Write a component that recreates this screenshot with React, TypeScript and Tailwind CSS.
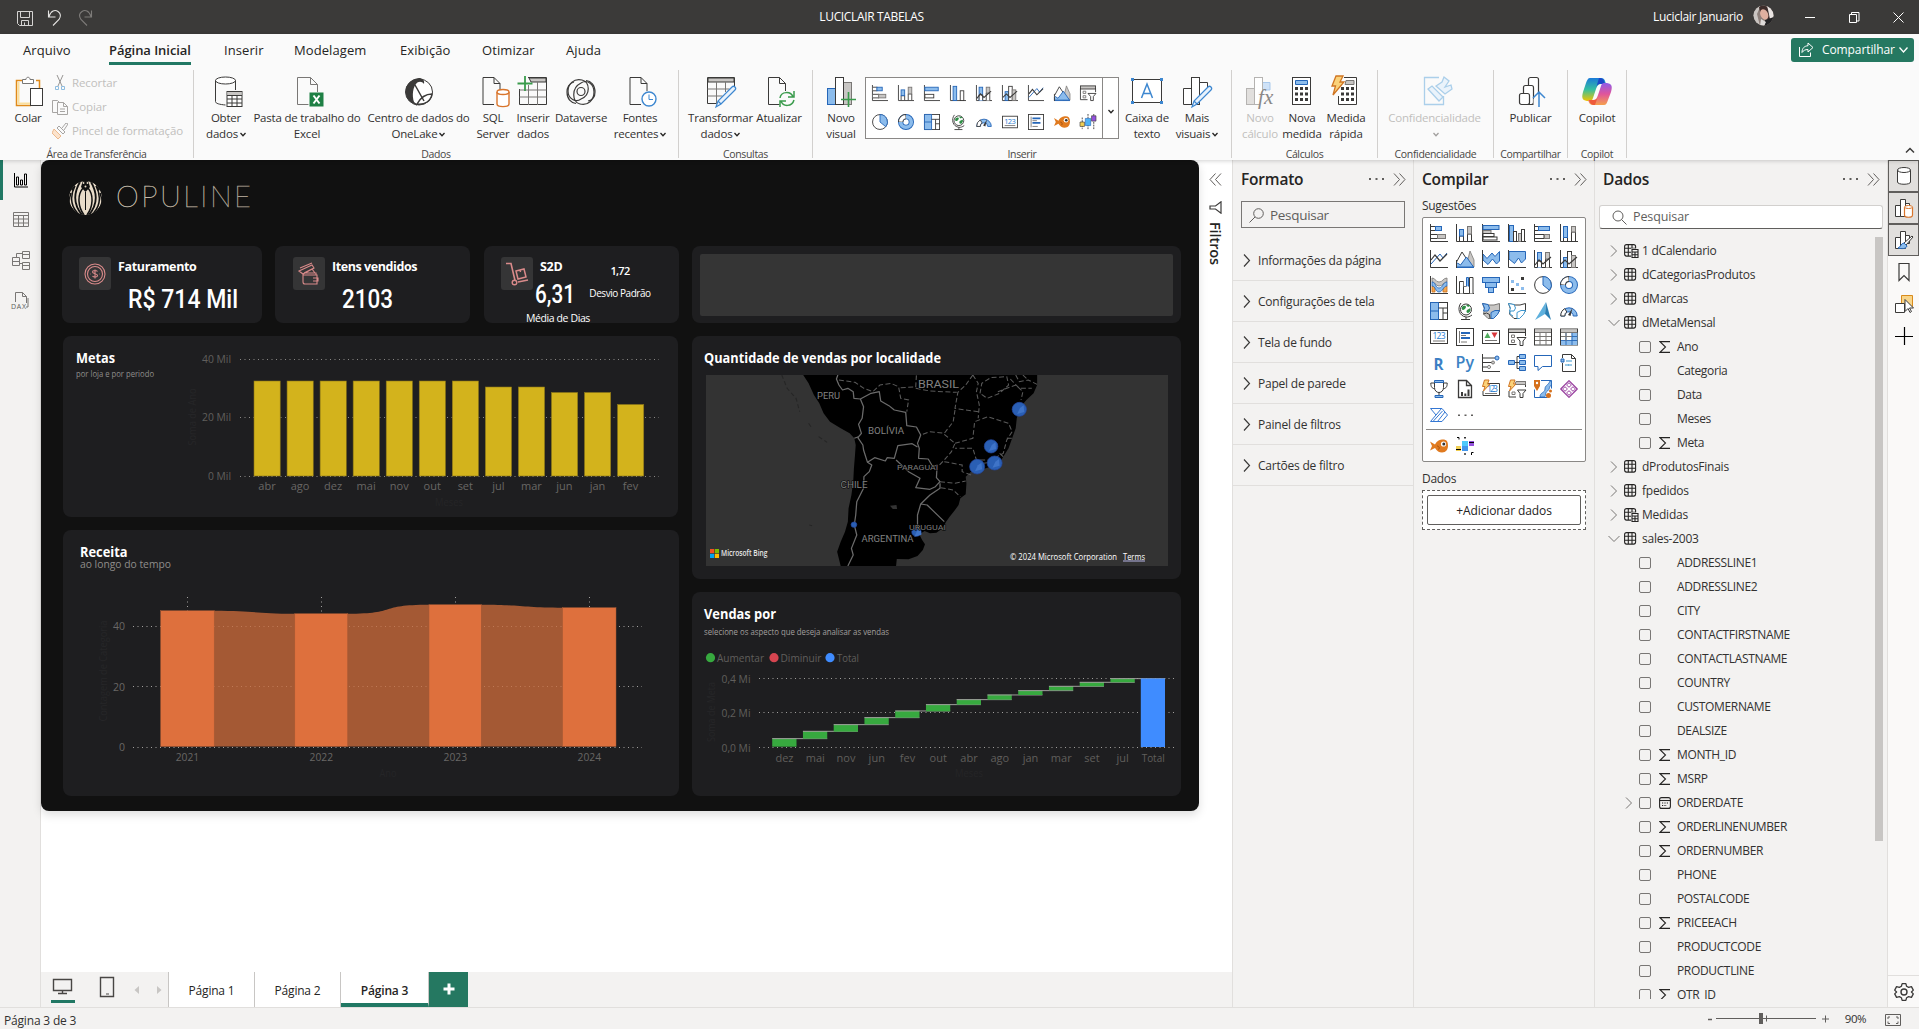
import React from "react";

const D = "#3b3a39";
const B = "#2566b8";
const F = "#8cbcec";
const G = "#c8c6c4";
const M = "#797775";

const axis = <path d="M.5 0V17.5H18" stroke={D} fill="none" />;

const glyphs: Record<string, React.ReactNode> = {
  stackedBar: (
    <>
      {axis}
      <path d="M1 2.5h5v4H1M1 10.5h7v4H1" fill="#fff" stroke={D} />
      <rect x="5.5" y="2.5" width="6" height="4" fill={F} stroke={B} />
      <rect x="7.5" y="10.5" width="8" height="4" fill={G} stroke={M} />
    </>
  ),
  stackedCol: (
    <>
      {axis}
      <path d="M3.5 17v-5h4v5M11.5 17V10h4v7" fill="#fff" stroke={D} />
      <rect x="3.5" y="5.5" width="4" height="6.5" fill={F} stroke={B} />
      <rect x="11.5" y="2.5" width="4" height="7.5" fill={G} stroke={M} />
    </>
  ),
  bar: (
    <>
      {axis}
      <rect x="1" y="1.5" width="16" height="4" fill={F} stroke={B} />
      <rect x="1" y="6.5" width="8" height="3" fill={G} stroke={M} />
      <rect x="1" y="9.5" width="11" height="3" fill="#fff" stroke={D} />
      <rect x="1" y="13" width="14" height="3" fill="#fff" stroke={D} />
    </>
  ),
  barSimple: (
    <>
      {axis}
      <rect x="1" y="2.5" width="15" height="4" fill={F} stroke={B} />
      <rect x="1" y="10.5" width="10" height="4" fill="#fff" stroke={D} />
    </>
  ),
  col: (
    <>
      {axis}
      <rect x="1.5" y="1.5" width="4" height="16" fill={F} stroke={B} />
      <rect x="5.5" y="7.5" width="3" height="10" fill="#fff" stroke={D} />
      <rect x="10.5" y="9.5" width="3" height="8" fill={G} stroke={M} />
      <rect x="13.5" y="5.5" width="3" height="12" fill="#fff" stroke={D} />
    </>
  ),
  colSimple: (
    <>
      {axis}
      <rect x="3.5" y="1.5" width="4" height="16" fill={F} stroke={B} />
      <rect x="11.500" y="6.5" width="4" height="11" fill="#fff" stroke={D} />
    </>
  ),
  fullBar: (
    <>
      {axis}
      <path d="M1 2.5h5v4H1M1 10.5h9v4H1" fill="#fff" stroke={D} />
      <rect x="4.5" y="2.5" width="11" height="4" fill={F} stroke={B} />
      <rect x="10.5" y="10.5" width="5" height="4" fill={G} stroke={M} />
    </>
  ),
  fullCol: (
    <>
      {axis}
      <path d="M11.5 17V8h4v9M3.5 17v-4h4v4" fill="#fff" stroke={D} />
      <rect x="3.5" y="2.5" width="4" height="11" fill={F} stroke={B} />
      <rect x="11.5" y="2.5" width="4" height="5.5" fill={G} stroke={M} />
    </>
  ),
  line: (
    <>
      {axis}
      <path d="M1 14 10 4l3 4 4-5" stroke={B} fill="none" />
      <path d="M1 10 5 5l5 6 7-7" stroke={D} fill="none" strokeWidth="1.2" />
    </>
  ),
  area: (
    <>
      <path d="M10 17 14 1l4 9v7z" fill={G} stroke={M} strokeWidth=".8" />
      <path d="M.5 12 6 2l6 9" fill="#fff" stroke={D} />
      <path d="M.5 17V14l1-1 3 2 6-8 7 10z" fill={F} stroke={B} />
      <path d="M0 17.5h18" stroke={B} />
      <path d="M.5 10v8" stroke={D} />
    </>
  ),
  stackArea: (
    <>
      <path d="M1 4 5 8.500l5-5.500 3 3.500 4.500-5v9.500L14.500 14 10.500 9 6 14.500 1 10z" fill={F} stroke={B} />
      {axis}
    </>
  ),
  fullArea: (
    <>
      <path d="M1 1.5h16.5V9l-4 4-3-5-4 5.500L1 9z" fill={F} stroke={B} />
      {axis}
    </>
  ),
  combo1: (
    <>
      {axis}
      <rect x="3.5" y="2.5" width="4" height="15" fill={F} stroke={B} />
      <path d="M3.5 17.5V11h4v6.500M11.500 17.500V9h4v8.500" fill="#fff" stroke={D} />
      <rect x="11.5" y="2.5" width="4" height="6.5" fill={G} stroke={M} />
      <path d="M1 15 5 10l4 4 8-7" fill="none" stroke={D} strokeWidth="1.2" />
    </>
  ),
  combo2: (
    <>
      {axis}
      <rect x="3.5" y="7.5" width="4" height="10" fill={F} stroke={B} />
      <rect x="7.5" y="1.5" width="4" height="16" fill="#fff" stroke={D} />
      <rect x="11.5" y="5.5" width="4" height="12" fill={G} stroke={M} />
      <path d="M1 14 5 10l4 4 8-7" fill="none" stroke={D} strokeWidth="1.2" />
    </>
  ),
  ribbon: (
    <>
      {axis}
      <path d="M2 10h3v6H2zM13 10h4v6h-4z" fill="#f3a650" stroke="#c96f1a" strokeWidth=".8" />
      <path d="M2 2c4 0 3 4 7 4s4-4 8-4v4c-4 0-4 4-8 4S6 6 2 6z" fill={G} stroke={M} strokeWidth=".8" />
      <path d="M2 6c4 0 3 6 7 6s4-6 8-6v4c-4 0-4 6-8 6s-3-6-7-6z" fill={F} stroke={B} strokeWidth=".8" />
    </>
  ),
  waterfall: (
    <>
      {axis}
      <path d="M3.500 17.500V5.500h4v12" fill="#fff" stroke={D} />
      <path d="M7.500 5v5.500h3V4" fill="none" stroke={M} />
      <path d="M10.500 10V1.500h2v9" fill={F} stroke={B} />
      <path d="M13.500 17.500V1.500h3.500v16" fill="#fff" stroke={D} />
    </>
  ),
  funnel: (
    <>
      <rect x=".5" y="1.5" width="17" height="5" fill={F} stroke={B} />
      <rect x="3.5" y="6.5" width="11" height="5" fill={F} stroke={B} />
      <rect x="6.5" y="11.5" width="5" height="5" fill={F} stroke={B} />
    </>
  ),
  scatter: (
    <>
      {axis}
      <path d="M3 12h3v3H3zM13 1h3v3h-3z" fill={D} />
      <path d="M3 4h3v3H3zM8 7h3v3H8zM13 11h3v3h-3z" fill={F} />
    </>
  ),
  pie: (
    <>
      <circle cx="9" cy="9" r="8.4" fill="#fff" stroke={D} />
      <path d="M9 .6a8.4 8.4 0 0 1 6.500 13.700L9 9z" fill={F} stroke={B} />
    </>
  ),
  donut: (
    <>
      <circle cx="9" cy="9" r="6" fill="none" stroke={B} strokeWidth="6" />
      <circle cx="9" cy="9" r="6" fill="none" stroke={F} strokeWidth="4" />
      <path d="M9 3a6 6 0 0 0-6 6" fill="none" stroke={D} strokeWidth="6" />
      <path d="M8.500 3a6 6 0 0 0-5.500 5.500" fill="none" stroke="#fff" strokeWidth="4" />
    </>
  ),
  treemap: (
    <>
      <rect x=".5" y=".5" width="17" height="17" fill="#fff" stroke={D} />
      <path d="M.5 .5h8v17h-8z" fill={F} stroke={B} />
      <path d="M.5 9h8" stroke={B} />
      <path d="M8.500 6h9M13 6v11.500M13 11h4.500" stroke={D} fill="none" />
    </>
  ),
  globe: (
    <>
      <circle cx="10" cy="7.500" r="5.500" fill="#fff" stroke={D} />
      <path d="M6 5c2-2 4-1 4 0S8 8 7 8 5.500 7 6 5zm5 3c2-1 3-2 3.500-1s-1 4-2.500 4-2-2-1-3zM10 3h3l1 1-2 1z" fill="#2f8f46" />
      <path d="M5 1C1 6 3 14 10 15c2 .2 4-.5 6-2M10 15v2.500M5 17.500h9" fill="none" stroke={D} />
    </>
  ),
  filledMap: (
    <>
      <path d="M.5 1.500 7 3h5l5.500-1.500V9l-3 4-4 3.500H6L1.500 12l1-5z" fill={G} stroke={M} />
      <path d="M.5 1.500 6 2.500 7.500 6 6 9H1.500l1-3z" fill={F} stroke={B} />
      <path d="M9 10.500l4-2h4.500l-2 4-4 4H9z" fill={F} stroke={B} />
      <path d="M1.500 12l3-1 3 1.500.5 4" fill="none" stroke={D} />
    </>
  ),
  shapeMap: (
    <>
      <path d="M.5 1.500 7 3h5l5.500-1.500V9l-3 4-4 3.500H6L1.500 12l1-5z" fill="#fff" stroke={D} />
      <path d="M.5 1.500 6 2.500 7.500 6 6 9H1.500l1-3zM9 10.500l4-2h4.500l-2 4-4 4H9zM2 9v3l3 2" fill="#fff" stroke="#3d97cf" />
    </>
  ),
  arrow: (
    <>
      <path d="M12 0 1 18l10-6z" fill="#5eb0dd" />
      <path d="M12 0 17 18l-6-6z" fill="#2b7fb3" />
    </>
  ),
  gauge: (
    <>
      <path d="M.8 14a8.200 8.200 0 0 1 16.400 0h-4a4.200 4.200 0 0 0-8.400 0z" fill={F} stroke={B} />
      <path d="M.8 14a8.200 8.200 0 0 1 4-7.400l2 3.400a4.200 4.200 0 0 0-2 4z" fill="#fff" stroke={D} />
      <path d="M8 13l4.500-7L10.500 14z" fill={D} />
    </>
  ),
  card123: (
    <>
      <rect x=".5" y="2.5" width="17" height="13" fill="#fff" stroke={D} />
      <text x="2.5" y="10.800" fontSize="8.500" fill="#1f7bd1" textLength="13" fontFamily="Open Sans">123</text>
      <path d="M3 13h12" stroke={M} />
    </>
  ),
  multi: (
    <>
      <rect x=".5" y=".5" width="17" height="17" fill="#fff" stroke={D} />
      <path d="M3.500 3v12" stroke={M} />
      <path d="M5 5h9M5 10h9" stroke={B} strokeWidth="2" />
      <path d="M5 7.500h5M5 14h6" stroke={M} />
    </>
  ),
  kpi: (
    <>
      <rect x=".5" y="2.5" width="17" height="13" fill="#fff" stroke={D} />
      <path d="M2.500 10 5.500 4.500 8.500 10z" fill="#4faa5b" />
      <path d="M9.500 4.500h6L12.500 10z" fill="#d8363b" />
      <path d="M3 12.500h12" stroke={M} />
    </>
  ),
  slicer: (
    <>
      <rect x=".5" y="1" width="17" height="3.5" fill={G} stroke={D} />
      <path d="M.5 4v12.500h8M17.500 4v4" stroke={D} fill="none" />
      <path d="M3.500 7h3v2.500h-3zM3.500 12h3v2.500h-3z" fill="none" stroke={M} />
      <path d="M9 9.500h9l-3 3.500v4.500h-3V13z" fill="#fff" stroke={D} />
    </>
  ),
  table: (
    <>
      <rect x=".5" y="1" width="17" height="16" fill="#fff" stroke={D} />
      <path d="M1 1.500h16v3H1z" fill={G} />
      <path d="M1 8.500h16M1 12.500h16M6 5v12M12 5v12M1 4.500h16" stroke={M} />
    </>
  ),
  matrix: (
    <>
      <rect x=".5" y="1" width="17" height="16" fill="#fff" stroke={D} />
      <path d="M1 1.500h16v3H1z" fill={G} />
      <path d="M11.500 4.500h6V17H1v-4h10.500z" fill={F} />
      <path d="M1 8.500h16M1 12.500h16M6 5v12M12 5v12M1 4.500h16" stroke={B} strokeWidth=".9" />
      <path d="M1 8.500h11M6 5v8M1 4.500h16" stroke={M} />
    </>
  ),
  r: <text x="3.500" y="15.500" fontSize="16" fontWeight="700" fill="#3c7fc4" textLength="10" lengthAdjust="spacingAndGlyphs" fontFamily="Open Sans">R</text>,
  py: <text x="-.5" y="14" fontSize="16" fontWeight="600" fill="#3c82c4" textLength="18.500" lengthAdjust="spacingAndGlyphs" fontFamily="Open Sans">Py</text>,
  dot: (
    <>
      {axis}
      <path d="M1 4h12M1 8.500h9M1 13h4" stroke={D} fill="none" />
      <circle cx="15" cy="4" r="2" fill={F} stroke={B} />
      <circle cx="11" cy="8.5" r="1.500" fill={G} stroke={M} />
      <circle cx="7" cy="13" r="1.500" fill="#fff" stroke={M} />
    </>
  ),
  tree: (
    <>
      <path d="M6 8.500h6M9 2.500v12h3M9 2.500h3" fill="none" stroke={D} />
      <path d="M.5 6.500h6v4h-6zM11.500.5h6v4h-6zM11.500 6.500h6v4h-6zM11.500 12.500h6v4h-6z" fill={F} stroke={B} />
    </>
  ),
  chat: <path d="M.5 1.500h17v11h-9L4 16.500v-4H.5z" fill="#fff" stroke={B} />,
  narrative: (
    <>
      <path d="M2.500 4V.5h9l4 4v13h-13V9M11.500.5v4h4" fill="none" stroke={D} />
      <path d="M1 5h3v3H1z" fill={F} stroke={B} />
      <path d="M6 7h6M5 11h4M8 11h4" stroke="#3d97cf" />
    </>
  ),
  trophy: (
    <>
      <path d="M4.500 1.500h9v6c0 3-2 5-4.500 5s-4.500-2-4.500-5zM4.500 3H.8c0 4 1 5 4 6M13.500 3h3.700c0 4-1 5-4 6M9 12v4" fill="#fff" stroke={D} />
      <path d="M4.500.5h9v2h-9zM5 15.500h8v2H5z" fill={F} stroke={B} />
    </>
  ),
  report: (
    <>
      <path d="M2.500.5h8l5 5v12h-13zM10.500.5v5h5" fill="#fff" stroke={D} strokeWidth="1.300" />
      <path d="M5 12h2v4H5zM8.300 13.500h2V16h-2zM11.500 9.500h2V16h-2z" fill={D} />
    </>
  ),
  flash123: (
    <>
      <path d="M6 3.500h11.500v12H1V11" fill="none" stroke={D} />
      <text x="5" y="12" fontSize="9" fill="#1f7bd1" textLength="11" fontFamily="Open Sans">123</text>
      <path d="M3 13.500h12" stroke={M} />
      <path d="M2.500 0H7L5.500 4H8L1.500 11 3 6.500H.5z" fill="#fad27a" stroke="#d07522" />
    </>
  ),
  flashSlicer: (
    <>
      <path d="M8 1.500h9.500V7M1 11v6h7" fill="none" stroke={D} />
      <path d="M8 1.500h9.500v3H7z" fill={G} stroke={M} />
      <path d="M4 12h3v2.500H4z" fill="none" stroke={M} />
      <path d="M9.500 10h8.500l-3 3.500v4h-3v-4z" fill="#fff" stroke={D} />
      <path d="M2.500 0H7L5.500 4H8L1.500 11 3 6.500H.5z" fill="#fad27a" stroke="#d07522" />
    </>
  ),
  azure: (
    <>
      <path d="M.5 9.500v8h13M7 .5h10.500v8" fill="none" stroke={B} />
      <path d="M6 17c0-5 5-4 5-8s3-3 5-8h1.500v4c-3 1-1 4-4 6s-1 4-3 6z" fill={F} stroke={B} strokeWidth=".8" />
      <path d="M0 0h6v6l-3 5-3-5z" fill="#d5701c" />
      <circle cx="3" cy="3" r="1.200" fill="#fff" />
      <circle cx="16.500" cy="11" r="1.500" fill="#d5701c" />
      <circle cx="14.500" cy="15.500" r="2.500" fill="#d5701c" />
    </>
  ),
  apps: (
    <>
      <path d="M9 .7 17.300 9 9 17.300.7 9z" fill="#fff" stroke="#94389b" strokeWidth="1.100" strokeLinejoin="round" />
      <g fill="#fff" stroke="#94389b" strokeWidth=".9">
        <rect x="7.200" y="3.200" width="3.600" height="3.600" rx="1.200" transform="rotate(45 9 5)" />
        <rect x="7.200" y="11.200" width="3.600" height="3.600" rx="1.200" transform="rotate(45 9 13)" />
        <rect x="3.200" y="7.200" width="3.600" height="3.600" rx="1.200" transform="rotate(45 5 9)" />
        <rect x="11.200" y="7.200" width="3.600" height="3.600" rx="1.200" transform="rotate(45 13 9)" />
      </g>
    </>
  ),
  automate: (
    <>
      <path d="M.5 2.500h11.500l5.500 6.500-5.500 6.500H.5L6 9z" fill="#fff" stroke="#3477d3" />
      <path d="M6 9 11.500 2.500M3 15.500 12.500 5M7.500 15.500 15 6" stroke="#3477d3" fill="none" />
    </>
  ),
  dots: <path d="M2 8.500h2v1.500H2zM8.500 8.500h2v1.500h-2zM15 8.500h2v1.500h-2z" fill="#605e5c" />,
  fish: (
    <>
      <path d="M0 4.500l5 3c2-4 5-5 8-5 3.500 0 5 2 5 6s-2 7-6 7c-3 0-5-1.500-7-4.500l-5 2.500 2-4.500z" fill="#e07a1f" />
      <circle cx="13.500" cy="7" r="2.600" fill="#fff" />
      <circle cx="13.800" cy="7" r="1.500" fill="#333" />
      <path d="M7 9c2 0 3 2 1.500 3.500" stroke="#a4500d" fill="none" />
    </>
  ),
  box: (
    <>
      <path d="M0 9h5v5H0z" fill="#f0cf54" />
      <path d="M6 4h6v5H6z" fill="#4fc9fb" />
      <path d="M6 9h6v5H6z" fill="#4296ec" />
      <path d="M13 4h5v5h-5z" fill="#9451dd" />
      <path d="M0 12.500h5M13 5.500h5" stroke="#000" />
      <path d="M1 .5h2v2M17.500 15.500h-2v2.500" stroke="#000" fill="none" />
      <path d="M8.200 0h1.600v1.600H8.200zM8.200 16.200h1.600v1.600H8.200z" />
    </>
  ),
  boxSmall: (
    <>
      <path d="M2.500 4v13M9 0v18M15.500 0v17" stroke={D} strokeDasharray="2 1" />
      <path d="M0 9h5v5H0z" fill="#f0cf54" stroke={D} strokeWidth=".7" />
      <path d="M6 5h6v8H6z" fill="#4fb3f5" stroke={B} strokeWidth=".7" />
      <path d="M13 2h5v6h-5z" fill="#9451dd" stroke={D} strokeWidth=".7" />
    </>
  ),
};

function Glyph({ k, s = 18 }: { k: string; s?: number }) {
  return (
    <svg width={s} height={s} viewBox="0 0 18 18" className="overflow-visible">
      {glyphs[k]}
    </svg>
  );
}

/* ---------- ribbon icons (32 × 32) ---------- */

const page = (
  <>
    <path d="M4.500 1.500h11l6 6V15M15.500 1.500v6h6" fill="none" stroke={D} />
    <path d="M4.500 1.500v27h11" fill="none" stroke={D} />
  </>
);

const pencil = (
  <path d="M30 11c1 1 1 2 0 3L16 28l-5 3 2-6 14-14c1-1 2-1 3 0zM13 25l3 3" fill="#e8f2fc" stroke="#3d87d0" strokeWidth="1.2" />
);

const bigIcons: Record<string, React.ReactNode> = {
  paste: (
    <g transform="translate(2 0)">
      <path d="M8 4.500H2.500v25H17M22 4.500h3.500V12" fill="none" stroke="#e08a1a" strokeWidth="1.500" />
      <path d="M4.500 6v21.500H16" fill="none" stroke="#fbdf9d" strokeWidth="2" />
      <path d="M8.500 7.500v-4H12c0-3 4-3 4 0h3.500v4z" fill="#fff" stroke={M} />
      <rect x="16.500" y="12.500" width="12" height="17" fill="#fff" stroke={D} />
    </g>
  ),
  getData: (
    <g transform="translate(1.500 0)">
      <ellipse cx="14" cy="4.500" rx="10" ry="3.500" fill="#fff" stroke={D} />
      <path d="M4 4.500v21c0 2 4 3 10 3.500M24 4.500V14" fill="none" stroke={D} />
      <rect x="15.500" y="15.500" width="15" height="15" fill="#fff" stroke={D} />
      <path d="M16 16h14v3.500H16z" fill={G} />
      <path d="M15.500 19.500h15M15.500 23h15M15.500 27h15M20.500 19v11.500M25.500 19v11.500" stroke={D} />
    </g>
  ),
  excel: (
    <>
      <path d="M6.500 28.500v-27h13l7 7V16M19.500 1.500v7h7M6.500 28.500h11" fill="none" stroke={M} />
      <rect x="18.500" y="16.500" width="14" height="14" fill="#1f8045" />
      <path d="M22.500 19.500l6 8M28.500 19.500l-6 8" stroke="#fff" strokeWidth="2" />
    </>
  ),
  onelake: (
    <>
      <ellipse cx="16" cy="16" rx="13.500" ry="13" fill="#fff" stroke={D} />
      <path d="M16 2C6 3 1 11 3 19c1 4 4 8 9 9-3-5-3-15 1-20 2-3 6-3 8 0C22 4 19 2 16 2z" fill={D} />
      <path d="M12 9l9 16M5 12c0 7 3 14 9 17M29 18c-4 0-10 1-15 10 8 1 14-3 15-10z" fill="none" stroke={D} strokeWidth="1.500" />
    </>
  ),
  sql: (
    <g transform="translate(1.500 0)">
      {page}
      <path d="M18.500 16v12c0 3.500 12 3.500 12 0V16" fill="#fff" stroke="#d9752c" strokeWidth="1.400" />
      <ellipse cx="24.500" cy="16" rx="6" ry="2.500" fill="#fff" stroke="#d9752c" strokeWidth="1.400" />
    </g>
  ),
  insertData: (
    <>
      <path d="M11 1.500h18.500v27h-27V13" fill="none" stroke={D} />
      <path d="M12 2h17v4H14z" fill={G} stroke={D} />
      <path d="M2.500 14h27M2.500 21h27M11.500 9v20M20.500 6v23" stroke={M} />
      <path d="M8 0v15M.5 7.500h15" stroke="#3a9b4c" strokeWidth="1.800" />
    </>
  ),
  dataverse: (
    <g fill="none" stroke={D} strokeWidth="1.200">
      <path d="M17 4C9 2 3 8 3 15c0 8 8 12 13 8M17 4c8 2 9 15-1 19M15 28c8 2 14-4 14-12 0-8-7-13-13-9M15 28C7 26 6 12 16 7" />
      <circle cx="16" cy="15.500" r="4" />
      <path d="M9 6C4 7 2 12 2 16c0 7 4 11 9 11.500M23 25c5-1 7-5 7-9 0-7-4-11-9-11.500" />
    </g>
  ),
  recent: (
    <g transform="translate(1.500 0)">
      {page}
      <circle cx="23.500" cy="23" r="7" fill="#fff" stroke="#3d87d0" strokeWidth="1.400" />
      <path d="M23.500 18.500V23.500h4" fill="none" stroke="#3d87d0" />
    </g>
  ),
  transform: (
    <>
      <path d="M2.500 1.500h27V12M2.500 1.500v26H12" fill="none" stroke={D} />
      <path d="M3 2h26v4H3z" fill={G} stroke={D} />
      <path d="M2.500 13h22M2.500 20h15M11.500 6v22M20.500 6v10" stroke={M} />
      {pencil}
    </>
  ),
  refresh: (
    <g transform="translate(1 0)">
      {page}
      <path d="M16 22c1-7 11-7 13-1M30 15v6h-6M30 24c-2 7-11 7-13 1M16 31v-6h6" fill="none" stroke="#3a9b4c" strokeWidth="1.500" />
    </g>
  ),
  newVisual: (
    <>
      <rect x="18.500" y="6.500" width="8" height="22" fill={G} stroke={M} />
      <rect x="2.500" y="12.500" width="8" height="16" fill={F} stroke={B} />
      <rect x="10.500" y="1.500" width="8" height="27" fill="#fff" stroke={D} />
      <path d="M23.500 16v15M16 23.500h15" stroke="#3a9b4c" strokeWidth="1.600" />
    </>
  ),
  textbox: (
    <>
      <rect x="1.500" y="3.500" width="29" height="23" fill="#fff" stroke={D} />
      <path d="M0 2h3v3H0zM29 2h3v3h-3zM0 25h3v3H0zM29 25h3v3h-3z" fill="#3d87d0" />
      <path d="M10.500 22l5.500-14 5.500 14M12.500 17.500h7" fill="none" stroke="#3d87d0" strokeWidth="1.500" />
    </>
  ),
  moreVisuals: (
    <>
      <path d="M18.500 28.500V6.500h8V12M10.500 28.500h-8v-16h8" fill="#fff" stroke={D} />
      <rect x="10.500" y="1.500" width="8" height="27" fill="#fff" stroke={D} />
      {pencil}
    </>
  ),
  newCalc: (
    <>
      <path d="M18 6.500h8V14h-8z" fill="#cfe2f7" stroke="#a9c9ec" />
      <rect x="2.500" y="12.500" width="8" height="16" fill="#e1dfdd" stroke="#b5b3b1" />
      <rect x="10.500" y="1.500" width="8" height="27" fill="#fff" stroke="#b5b3b1" />
      <path d="M14 16h16v15H16z" fill="#fafafa" />
      <text x="14" y="28" fontFamily="Liberation Serif" fontStyle="italic" fontSize="21" fill="#8a8886" textLength="15">fx</text>
    </>
  ),
  newMeasure: (
    <>
      <rect x="6.500" y="1.500" width="18" height="27" fill="#fff" stroke={D} />
      <path d="M9.500 4.500h12v4h-12z" fill={F} stroke={B} />
      <path d="M9 12.500h13M9 18h13M9 23.500h13" stroke={D} strokeWidth="3" strokeDasharray="3 2" />
    </>
  ),
  quick: (
    <>
      <path d="M14 1.500h12.500v27h-18V20" fill="#fff" stroke={D} />
      <path d="M16 4.500h8v4h-9z" fill={G} stroke={M} />
      <path d="M11 12.500h13M11 18h13M11 23.500h13" stroke={D} strokeWidth="3" strokeDasharray="3 2" />
      <path d="M6 0h7l-3 6h4L3 19l2.500-9H2z" fill="#fad27a" stroke="#d07522" strokeWidth="1.300" />
    </>
  ),
  sensitivity: (
    <g fill="#eaf3fb" stroke="#abcfea" strokeWidth="1.300">
      <path d="M20 1.500H5.500v27h19V20" fill="none" />
      <path d="M9 13l4-3 11 11-4 4z" />
      <path d="M17 10l6-4 2-5 5 4-4 6 6-2 1 4-7 5z" />
    </g>
  ),
  publish: (
    <g fill="#fff" stroke={D} strokeWidth="1.200">
      <rect x="13.500" y="1.500" width="10" height="27" rx="2" />
      <rect x="8.500" y="9.500" width="10" height="19" rx="2" />
      <rect x="4.500" y="17.500" width="10" height="11" rx="2" />
      <path d="M18.500 23l6-7 6 7v8h-12z" fill="#fafafa" stroke="none" />
      <path d="M18 22l6-6 6 6M24 17v14" fill="none" stroke="#3d87d0" strokeWidth="1.500" />
    </g>
  ),
  copilot: (
    <>
      <defs>
        <linearGradient id="cpA" x1="0" y1="0" x2="0" y2="1">
          <stop offset="0" stopColor="#1a7ad9" />
          <stop offset=".5" stopColor="#35bfa0" />
          <stop offset="1" stopColor="#f2c500" />
        </linearGradient>
        <linearGradient id="cpB" x1="0" y1="0" x2="0" y2="1">
          <stop offset="0" stopColor="#8f5be8" />
          <stop offset=".5" stopColor="#e0559b" />
          <stop offset="1" stopColor="#f5a04c" />
        </linearGradient>
      </defs>
      <path d="M9 2h11c3 0 4 2 5 6h-5c-3 0-4 2-5 5l-3 9c-1 3-2 3-4 3-6 0-8-2-6-9l3-9c1-3 2-5 4-5z" fill="url(#cpA)" />
      <path d="M18 2c4 0 5 2 6 6h-5c-2 0-3 1-4 4z" fill="#1b48c8" />
      <path d="M23 29H12c-3 0-4-2-5-5h5c3 0 4-2 5-5l3-9c1-3 2-3 4-3 6 0 8 2 6 9l-3 8c-1 3-2 5-4 5z" fill="url(#cpB)" />
      <path d="M14 29c-4 0-5-2-6-5h5c2 0 3-1 4-4z" fill="#ee5a3a" />
    </>
  ),
};

function Caret({ c = "#252423" }: { c?: string }) {
  return (
    <svg width="6" height="5" viewBox="0 0 6 5" className="ml-[2px] inline-block">
      <path d="M.5 1 3 3.700 5.500 1" fill="none" stroke={c} strokeWidth="1.300" />
    </svg>
  );
}

function RibbonButton({ w, icon, l1, l2, caret, off }: { w: string; icon: string; l1: string; l2?: string; caret?: boolean; off?: boolean }) {
  return (
    <div className={`flex shrink-0 flex-col items-center whitespace-nowrap text-[11.5px] leading-4 tracking-[-0.2px] ${w} ${off ? "text-[#c1bfbd]" : "text-[#323130]"}`}>
      <svg width="32" height="32" viewBox="0 0 32 32" className="mt-[7px] mb-[2px] shrink-0 overflow-visible">{bigIcons[icon]}</svg>
      <span>{l1}</span>
      <span className="flex h-4 items-center">
        {l2}
        {caret && <Caret c={off ? "#a19f9d" : "#252423"} />}
      </span>
    </div>
  );
}

function RibbonGroup({ w, label, pl = "pl-0", children }: { w: string; label: string; pl?: string; children: React.ReactNode }) {
  return (
    <div className={`flex h-[91px] shrink-0 ${w}`}>
      <div className="flex min-w-0 flex-1 flex-col">
        <div className={`flex h-[79px] shrink-0 ${pl}`}>{children}</div>
        <div className="h-3 text-center text-[10.5px] leading-3 tracking-[-0.35px] whitespace-nowrap text-[#484644]">{label}</div>
      </div>
      <div className="mt-px h-[88px] w-px bg-[#d2d0ce]" />
    </div>
  );
}

const galleryIcons = ["stackedBar", "stackedCol", "barSimple", "colSimple", "combo1", "combo2", "line", "area", "slicer", "pie", "donut", "treemap", "globe", "gauge", "card123", "multi", "fish", "boxSmall"];

function TitleBar() {
  return (
    <header className="flex h-[34px] items-center bg-[#3b3a39] text-[12px] tracking-[-0.3px] text-white">
      <svg width="100" height="34" className="shrink-0" fill="none" stroke="#fff">
        <path d="M17.500 11.500h15v14h-13l-2-2zM20.500 11.500v6h9v-6M21.500 25.500v-5h7v5M24.500 22.500v3" stroke="#d5d4d3" />
        <path d="M48.500 10.500v6.500h7M49 16.500c2-6 6-7 9-5 3 2 3 5 1 8l-6 6" stroke="#e5e4e3" strokeWidth="1.100" />
        <path d="M91.500 10.500v6.500h-7M91 16.500c-2-6-6-7-9-5-3 2-3 5-1 8l6 6" stroke="#7d7b79" strokeWidth="1.100" />
      </svg>
      <div className="ml-[718px] w-[107px] whitespace-nowrap text-center tracking-[-0.35px]">LUCICLAIR TABELAS</div>
      <div className="ml-[728px] w-[92px] whitespace-nowrap">Luciclair Januario</div>
      <svg width="21" height="21" viewBox="0 0 21 21" className="mb-1 ml-2 shrink-0">
        <defs><clipPath id="av"><circle cx="10.500" cy="10.500" r="10" /></clipPath></defs>
        <g clipPath="url(#av)">
          <rect width="21" height="21" fill="#8d7f7a" />
          <path d="M0 0h8L4 9l3 12H0z" fill="#c9c4c1" />
          <path d="M6 2c4-3 9-1 10 4l1 9-4-1-6-7z" fill="#3d2c2a" />
          <path d="M14 0h7v12l-4 2z" fill="#e9e4e2" />
          <ellipse cx="11" cy="9.500" rx="3.800" ry="5.500" fill="#e0b0a0" transform="rotate(-25 11 9)" />
          <path d="M12 15l9-3v9h-9z" fill="#232325" />
          <path d="M8 14l5 3-2 4H7z" fill="#dedbd9" />
        </g>
      </svg>
      <svg width="145" height="34" className="shrink-0" fill="none" stroke="#fff">
        <path d="M31 17.500h10" />
        <path d="M75.500 14.500h7v8h-7zM77.500 14.500v-2h7.500v8.500h-2.500" />
        <path d="M119.500 12.500l10 10M129.500 12.500l-10 10" />
      </svg>
    </header>
  );
}

const menu: [string, string, boolean?][] = [
  ["Arquivo", "w-[86px]"],
  ["Página Inicial", "w-[115px]", true],
  ["Inserir", "w-[70px]"],
  ["Modelagem", "w-[106px]"],
  ["Exibição", "w-[82px]"],
  ["Otimizar", "w-[84px]"],
  ["Ajuda", "w-[60px]"],
];

function Ribbon() {
  return (
    <div className="relative z-10 h-[126px] bg-[#fafafa] shadow-[0_1px_4px_rgba(0,0,0,0.18)]">
      <div className="flex h-[35px] items-start justify-between pr-[5px] pl-[23px]">
        <nav className="flex text-[13px] text-[#252423]">
          {menu.map(([t, w, on]) => (
            <div key={t} className={w}>
              <span className={`inline-block pt-[7px] leading-[18px] whitespace-nowrap ${on ? "border-b-3 border-[#217864] pb-[3px] font-semibold tracking-[-0.05px]" : "tracking-[0.08px]"}`}>{t}</span>
            </div>
          ))}
        </nav>
        <button className="mt-1 flex h-6 w-[123px] items-center rounded-[3px] bg-[#257861] pl-[7px] text-[12px] font-medium tracking-[-0.1px] text-white">
          <svg width="16" height="16" viewBox="0 0 16 16" fill="none" stroke="#fff" className="mr-2 shrink-0">
            <path d="M1.500 5v9.500h11v-4M10 1l5 4.500-5 4.500V7.500c-3 0-4.500 1-6 3C4 6 6.500 4 10 3.700z" />
          </svg>
          Compartilhar
          <svg width="9" height="6" viewBox="0 0 9 6" fill="none" stroke="#fff" className="ml-[4px] shrink-0"><path d="M.5.5l4 4.500 4-4.500" strokeWidth="1.300" /></svg>
        </button>
      </div>
      <div className="flex h-[91px]">
        <RibbonGroup w="w-[194px]" label="Área de Transferência">
          <div className="flex w-full">
            <div className="ml-3"><RibbonButton w="w-[32px]" icon="paste" l1="Colar" /></div>
            <div className="ml-2 flex flex-col pt-[2px] text-[11.5px] tracking-[-0.1px] whitespace-nowrap text-[#c1bfbd]">
              <div className="flex h-6 items-center gap-1">
                <svg width="16" height="16" viewBox="0 0 16 16" fill="none" stroke="#979593"><path d="M5 0l5 11M11 0L6 11" /><path d="M3.500 11.500h3v3h-3zM9.500 11.500h3v3h-3z" stroke="#8fbde0" /></svg>
                Recortar
              </div>
              <div className="flex h-6 items-center gap-1">
                <svg width="16" height="16" viewBox="0 0 16 16" fill="none" stroke="#a7a5a3"><path d="M5 13.500H.5V1.500h5l2 2M5.500 3.500h6l4 4v8h-10zM11.500 3.500v4h4M8 10h5M8 12.500h5" /></svg>
                Copiar
              </div>
              <div className="flex h-6 items-center gap-1">
                <svg width="16" height="16" viewBox="0 0 16 16" fill="none" stroke="#a7a5a3"><path d="M2 6l7 7-3 3-6-6z" fill="#fbe3cd" stroke="#ecb98d" /><path d="M5 5l2-2 6 6-2 2zM10 5l4-5 2 1-4 6" /></svg>
                Pincel de formatação
              </div>
            </div>
          </div>
        </RibbonGroup>
        <RibbonGroup w="w-[485px]" label="Dados" pl="pl-[5px]">
          <RibbonButton w="w-[54px]" icon="getData" l1="Obter" l2="dados" caret />
          <RibbonButton w="w-[108px]" icon="excel" l1="Pasta de trabalho do" l2="Excel" />
          <RibbonButton w="w-[115px]" icon="onelake" l1="Centro de dados do" l2="OneLake" caret />
          <RibbonButton w="w-[34px]" icon="sql" l1="SQL" l2="Server" />
          <RibbonButton w="w-[46px]" icon="insertData" l1="Inserir" l2="dados" />
          <RibbonButton w="w-[50px]" icon="dataverse" l1="Dataverse" />
          <RibbonButton w="w-[68px]" icon="recent" l1="Fontes" l2="recentes" caret />
        </RibbonGroup>
        <RibbonGroup w="w-[134px]" label="Consultas" pl="pl-[8px]">
          <RibbonButton w="w-[67px]" icon="transform" l1="Transformar" l2="dados" caret />
          <RibbonButton w="w-[50px]" icon="refresh" l1="Atualizar" />
        </RibbonGroup>
        <RibbonGroup w="w-[419px]" label="Inserir" pl="pl-[4px]">
          <RibbonButton w="w-[48px]" icon="newVisual" l1="Novo" l2="visual" />
          <div className="mt-2 flex h-[62px] w-[254px] shrink-0 border border-[#8a8886] bg-white">
            <div className="grid w-[237px] grid-cols-[repeat(9,26px)] grid-rows-[29px_29px] place-items-center border-r border-[#8a8886] pl-[1px]">
              {galleryIcons.map((k) => <Glyph key={k} k={k} s={16} />)}
            </div>
            <div className="flex flex-1 items-center justify-center pr-[2px] pt-[6px]"><Caret /></div>
          </div>
          <RibbonButton w="w-[56px]" icon="textbox" l1="Caixa de" l2="texto" />
          <RibbonButton w="w-[44px]" icon="moreVisuals" l1="Mais" l2="visuais" caret />
        </RibbonGroup>
        <RibbonGroup w="w-[146px]" label="Cálculos" pl="pl-[7px]">
          <RibbonButton w="w-[42px]" icon="newCalc" l1="Novo" l2="cálculo" off />
          <RibbonButton w="w-[42px]" icon="newMeasure" l1="Nova" l2="medida" />
          <RibbonButton w="w-[46px]" icon="quick" l1="Medida" l2="rápida" />
        </RibbonGroup>
        <RibbonGroup w="w-[116px]" label="Confidencialidade">
          <RibbonButton w="w-[113px]" icon="sensitivity" l1="Confidencialidade" caret off />
        </RibbonGroup>
        <RibbonGroup w="w-[74px]" label="Compartilhar">
          <RibbonButton w="w-[73px]" icon="publish" l1="Publicar" />
        </RibbonGroup>
        <RibbonGroup w="w-[59px]" label="Copilot">
          <RibbonButton w="w-[58px]" icon="copilot" l1="Copilot" />
        </RibbonGroup>
        <svg width="10" height="7" viewBox="0 0 10 7" className="mt-[78px] mr-1 ml-auto"><path d="M1 5.500 5 1.500l4 4" fill="none" stroke={D} strokeWidth="1.500" /></svg>
      </div>
    </div>
  );
}

function LeftNav() {
  return (
    <aside className="flex w-[41px] shrink-0 border-r border-[#e1dfdd] bg-[#f3f2f1]">
      <div className="h-10 w-[3px] bg-[#217864]" />
      <div className="flex flex-col">
        <svg width="36" height="40" fill="none" stroke="#000"><path d="M11.500 13v14H25M13.500 25v-8h2v8zM17.500 25v-5h2v5zM21.500 25V14h2v11z" /></svg>
        <svg width="36" height="40" fill="none" stroke="#797775"><path d="M10.500 12.500h15v14h-15zM10.500 15.500h15M10.500 19h15M10.500 23h15M15.500 15.500v11M20.500 15.500v11" /></svg>
        <svg width="36" height="40" fill="none" stroke="#797775"><path d="M9.500 17.500h7v8h-7zM9.500 21.500h7M19.500 11.500h7v7h-7zM19.500 14.500h7M19.500 22.500h7v7h-7zM19.500 25.500h7M13.500 17.500v-4h6M16.500 23.500h3" /></svg>
        <svg width="36" height="40" fill="none" stroke="#797775"><path d="M12.500 22V12.500h7l4 4V23M19.500 12.500v4h4M25 18v9h-2" /><text x="8" y="28.500" fontSize="7" stroke="none" fill="#605e5c" textLength="15" fontFamily="Open Sans">DAX</text></svg>
      </div>
    </aside>
  );
}

function Tx({ x, y, w, s = 12, c = "#605e5c", a = "start", f = "Open Sans", wt = 400, children }: { x: number; y: number; w?: number; s?: number; c?: string; a?: "start" | "middle" | "end"; f?: string; wt?: number; children: React.ReactNode }) {
  return (
    <text x={x} y={y} fontSize={s} fill={c} textAnchor={a} fontFamily={f} fontWeight={wt} textLength={w} lengthAdjust="spacingAndGlyphs">{children}</text>
  );
}

function Brand() {
  return (
    <svg width="190" height="40" viewBox="0 0 190 40">
      <defs>
        <linearGradient id="brandText" gradientUnits="userSpaceOnUse" x1="47" x2="182" y1="0" y2="0"><stop offset="0" stopColor="#cfc3b2" /><stop offset=".6" stopColor="#b3a899" /><stop offset="1" stopColor="#a1978a" /></linearGradient>
        <clipPath id="brandOval"><ellipse cx="16.500" cy="18" rx="16.500" ry="17" /></clipPath>
      </defs>
      <g clipPath="url(#brandOval)">
        <ellipse cx="16.500" cy="18" rx="16.500" ry="17" fill="#e9dcc9" />
        <g fill="none" stroke="#111" strokeWidth="1.500">
          <path d="M15 35C9 27 8 15 14 8M18 35c6-8 7-20 1-27" />
          <path d="M14 36C5 26 4 14 11 2M19 36c9-10 10-22 3-34" strokeWidth="1.800" />
          <path d="M12 36C2 29 0 17 6 6M21 36c10-7 12-19 6-30" />
          <path d="M10 36C1 32-2 24 2 13M23 36c9-4 12-12 8-23" />
          <path d="M16.500 12v18" strokeWidth="1" />
        </g>
        <path d="M16.500 12 12 7l2-7h5l2 7z" fill="#111" />
        <path d="M0 9l5-8 3-1-4 11zM33 9l-5-8-3-1 4 11z" fill="#111" />
        <g fill="#e9dcc9"><circle cx="14.500" cy="3" r=".9" /><circle cx="18.500" cy="3" r=".9" /><circle cx="16.500" cy="6.500" r="1" /></g>
      </g>
      <text x="47" y="27" fontFamily="Lato" fontWeight="200" fontSize="29" fill="url(#brandText)" stroke="url(#brandText)" strokeWidth=".45" textLength="135" lengthAdjust="spacing">OPULINE</text>
    </svg>
  );
}

function IconTile({ children }: { children: React.ReactNode }) {
  return (
    <div className="flex h-[33px] w-8 shrink-0 items-center justify-center rounded-[3px] bg-[#353536]">
      <svg width="24" height="24" viewBox="0 0 24 24" fill="none" stroke="#d98a8a" strokeWidth="1.100">{children}</svg>
    </div>
  );
}

const kpiTitle = "mt-px text-[12.5px] font-bold leading-[18px] whitespace-nowrap text-white";
const cardBox = "rounded-lg bg-[#1e1e20]";

function KpiRow() {
  return (
    <div className="flex h-[77px] shrink-0 text-white">
      <div className={`flex w-[200px] pt-[11px] pl-[17px] ${cardBox}`}>
        <IconTile>
          <circle cx="12" cy="12" r="10" /><circle cx="12" cy="12" r="7.500" />
          <path d="M14.500 9.500c-1-1.500-5-1.500-5 .5s5 1.500 5 3.500-4 2-5 .5M12 7.500v9M7 12h.5M16.500 12h.5" />
        </IconTile>
        <div className="ml-[7px]">
          <div className={`${kpiTitle} tracking-[-0.35px]`}>Faturamento</div>
          <svg width="125" height="44" className="block"><Tx x={10} y={32} w={110} s={25} c="#fff" f="Roboto" wt={500}>R$ 714 Mil</Tx></svg>
        </div>
      </div>
      <div className={`ml-[13px] flex w-[195px] pt-[11px] pl-[18px] ${cardBox}`}>
        <IconTile>
          <path d="M6 13h14v9H8c-1.500 0-2-1-2-2zM16 16h5v3h-5M6 13c0-1 1-2 2-2h11v2M2 9l13-6 2 3-11 6zM3 6l12-5M7 11l8-4 3 4" />
        </IconTile>
        <div className="ml-[7px]">
          <div className={`${kpiTitle} tracking-[-0.42px]`}>Itens vendidos</div>
          <svg width="100" height="44" className="block"><Tx x={10} y={32} w={51} s={25} c="#fff" f="Roboto" wt={500}>2103</Tx></svg>
        </div>
      </div>
      <div className={`ml-[14px] flex w-[195px] overflow-hidden pt-[11px] pl-[17px] ${cardBox}`}>
        <IconTile>
          <path d="M1 1.500h5l4 17M13 20l10-2" strokeWidth="1.600" /><circle cx="9.500" cy="20.500" r="2.300" strokeWidth="1.400" />
          <path d="M11 9l8-2 2 8-8 2zM15 8l.5 2" strokeWidth="1.500" />
        </IconTile>
        <div className="ml-[2px] w-[42px]">
          <div className={`pl-[5px] tracking-[-0.3px] ${kpiTitle}`}>S2D</div>
          <svg width="42" height="34" className="block"><Tx x={0} y={27} w={40} s={25} c="#fff" f="Roboto" wt={500}>6,31</Tx></svg>
          <div className="ml-[-9px] text-[10.5px] leading-4 tracking-[-0.4px] whitespace-nowrap">Média de Dias</div>
        </div>
        <div className="ml-[12px] flex w-[62px] flex-col items-center pt-[5px] leading-[18px] whitespace-nowrap">
          <div className="text-[11px] font-semibold tracking-[-0.7px]">1,72</div>
          <div className="pt-[4px] text-[10px] tracking-[-0.45px]">Desvio Padrão</div>
        </div>
      </div>
    </div>
  );
}

const goalBars: [string, number][] = [["abr", 381], ["ago", 381], ["dez", 381], ["mai", 381], ["nov", 381], ["out", 381], ["set", 381], ["jul", 387], ["mar", 387], ["jun", 392.5], ["jan", 392.5], ["fev", 404.5]];

function Goals() {
  return (
    <section className={`ml-[1px] h-[181px] w-[615px] ${cardBox}`}>
      <svg width="615" height="181" viewBox="63 336 615 181">
        <Tx x={76} y={363} w={39} s={14} c="#fff" wt={700}>Metas</Tx>
        <Tx x={76} y={377} w={78} s={8.5} c="#8f8d8b">por loja e por periodo</Tx>
        {[359.5, 417.5, 476.5].map((y) => <path key={y} d={`M240 ${y}H659`} stroke="#8a8886" strokeDasharray="1 3.500" />)}
        <Tx x={231} y={363} w={29} a="end" s={11.5}>40 Mil</Tx>
        <Tx x={231} y={421} w={29} a="end" s={11.5}>20 Mil</Tx>
        <Tx x={231} y={480} w={23} a="end" s={11.5}>0 Mil</Tx>
        {goalBars.map(([m, t], i) => (
          <g key={m}>
            <rect x={254 + i * 33.05} y={t} width="26.200" height={476 - t} fill="#d3b31c" stroke="#8a7618" strokeWidth=".6" />
            <Tx x={267 + i * 33.05} y={490} a="middle" s={11} c="#696765">{m}</Tx>
          </g>
        ))}
        <Tx x={449} y={506} w={28} a="middle" s={10.5} c="#252527">Meses</Tx>
        <text x="-417" y="196" transform="rotate(-90)" textAnchor="middle" fontSize="11" fill="#262628" fontFamily="Open Sans" textLength="57" lengthAdjust="spacingAndGlyphs">Soma de Ano</text>
      </svg>
    </section>
  );
}

function Revenue() {
  const bars: [number, number, number, string][] = [[160.6, 53.6, 610.7, "2021"], [294.8, 53, 613.7, "2022"], [429, 52.6, 604.7, "2023"], [562.6, 53.4, 607.7, "2024"]];
  return (
    <section className={`ml-[1px] h-[266px] w-[616px] ${cardBox}`}>
      <svg width="616" height="266" viewBox="63 530 616 266">
        <Tx x={80} y={556.5} w={47.5} s={13.5} c="#fff" wt={700}>Receita</Tx>
        <Tx x={80} y={568} w={91} s={10.5} c="#8f8d8b">ao longo do tempo</Tx>
        {[626.5, 686.5, 747.5].map((y) => <path key={y} d={`M133 ${y}H642`} stroke="#a19f9d" strokeDasharray="1 3.500" />)}
        {[187.5, 321.5, 455.5, 589.5].map((x) => <path key={x} d={`M${x} 597V748`} stroke="#a19f9d" strokeDasharray="1 3.500" />)}
        <path d="M214 610.700C254 610.700 255 613.700 295 613.700V746.500H214zM347.500 613.700C400 613.700 376 604.700 429 604.700V746.500H347.500zM481.500 604.700C522 604.700 522 607.700 563 607.700V746.500H481.500z" fill="#a45934" />
        {[626.5, 686.5].map((y) => <path key={y} d={`M214 ${y}H563`} stroke="#c07a56" strokeDasharray="1 3.500" />)}
        {bars.map(([x, w, t, l]) => (
          <g key={l}>
            <rect x={x} y={t} width={w} height={746.5 - t} fill="#de703d" stroke="#a45934" strokeWidth=".5" />
            <Tx x={x + w / 2} y={761} w={23.5} a="middle" s={11} c="#696765">{l}</Tx>
          </g>
        ))}
        <Tx x={125} y={630} w={12} a="end" s={11} c="#696765">40</Tx>
        <Tx x={125} y={690.5} w={12} a="end" s={11} c="#696765">20</Tx>
        <Tx x={125} y={751} w={6} a="end" s={11} c="#696765">0</Tx>
        <Tx x={388} y={777} w={17} a="middle" s={10.5} c="#252527">Ano</Tx>
        <text x="-671" y="107" transform="rotate(-90)" textAnchor="middle" fontSize="11" fill="#262628" fontFamily="Open Sans" textLength="101" lengthAdjust="spacingAndGlyphs">Contagem de Categoria</text>
      </svg>
    </section>
  );
}

function MapCard() {
  const solid = [
    "M442 660 438 672 445 690 455 705 470 700 485 710 487 730 505 732 535 715 558 710 562 738 585 752 600 765 632 772 635 812 662 816 674 840 665 865 670 880 668 910 695 912 708 935 720 930 718 968 728 980 715 995 700 1003 660 998 672 970 640 950 605 915",
    "M505 732 514 755 510 790 500 808 508 835 498 848 512 870 514 885 525 922 545 908 575 918 580 908 600 910 610 872 650 866 665 876",
    "M525 922 537 930 530 950 515 965 514 1000 495 1040 492 1080 488 1110 495 1140 480 1180 485 1200 470 1233",
    "M728 985 728 1000 700 1020 674 1047 665 1080 665 1130M674 1047 692 1050 740 1100",
    "M500 845 488 850",
  ];
  const dashed = [
    "M445 675 490 682 515 700 540 710 560 690 590 685 612 695 618 730 640 735 635 770M618 698 660 696 662 660M660 700 700 708 775 712",
    "M820 660 800 690 778 712 770 760 800 765 835 770M820 660 835 685 830 710 838 750 835 790",
    "M840 715 845 685 870 668 915 665 920 690 895 715 860 730 840 715M890 710 940 690 960 710 955 735",
    "M940 660 950 680 975 675 1000 688M925 672 950 700 985 700M960 660 972 672",
    "M770 765 765 800 740 835 700 830 674 840M740 838 770 865 760 890 740 915 722 935M770 865 820 850 825 800 862 785 920 805 930 830 915 855 905 895 870 915 830 915 820 880 770 880",
    "M740 920 790 930 790 950 815 960M728 980 770 985 800 978M730 998 765 1005 785 1025M830 918 850 925 895 918M915 850 930 850M895 895 905 905",
  ];
  const bubbles = [[950, 763, 20, 21], [871, 874, 19, 20], [832, 935, 21, 22], [881, 924, 21, 21], [487, 1109, 8, 8], [662, 1131, 13, 13]];
  return (
    <section className={`h-[243px] ${cardBox}`}>
      <svg width="489" height="243" viewBox="692 336 489 243">
        <defs><clipPath id="mapClip"><rect x="706" y="375" width="462" height="191" /></clipPath></defs>
        <Tx x={704} y={363} w={237} s={13.5} c="#fff" wt={700}>Quantidade de vendas por localidade</Tx>
        <rect x="706" y="375" width="462" height="191" fill="#333" />
        <g clipPath="url(#mapClip)">
          <g transform="translate(680 155) scale(0.357143 0.333333)">
            <path d="M345 660 360 685 375 720 390 745 402 775 420 800 450 820 475 835 488 850 492 870 490 900 487 940 485 980 480 1020 472 1060 470 1100 462 1130 450 1160 440 1190 450 1233 605 1233 607 1212 640 1213 665 1203 680 1185 686 1168 678 1155 670 1138 685 1128 700 1135 718 1133 735 1120 745 1100 755 1085 770 1065 780 1050 785 1030 800 1018 802 985 800 965 815 950 840 945 870 935 895 925 905 905 920 880 930 850 940 820 943 790 950 760 970 735 990 715 1000 690 1000 660Z" />
            <path d="M588 1052 606 1050 608 1062 596 1062z" fill="#333" />
            <path d="M285 660 300 700 325 730 335 770M360 805 370 820M388 845 412 862M362 1110 370 1112" fill="none" stroke="#262626" strokeWidth="3" strokeDasharray="12 8" />
            {solid.map((d) => <path key={d} d={d} fill="none" stroke="#6b6b6b" strokeWidth="3.500" strokeLinejoin="round" />)}
            {dashed.map((d) => <path key={d} d={d} fill="none" stroke="#5a5a5a" strokeWidth="3" strokeDasharray="14 7" />)}
            {bubbles.map(([x, y, rx, ry]) => (
              <g key={x}>
                <ellipse cx={x} cy={y} rx={rx} ry={ry} fill="#2a5fb4" stroke="#2448a0" strokeWidth="2" />
                {rx > 10 && <path d={`M${x - 6} ${y + 14} ${x + 2} ${y - 4} ${x + 12} ${y - 12} ${x + 14} ${y + 8}z`} fill="#3f74c8" />}
              </g>
            ))}
          </g>
          <g stroke="#000" strokeWidth="1" className="[paint-order:stroke]">
            <Tx x={918} y={387.5} w={41} s={10.5} c="#828282" f="Roboto">BRASIL</Tx>
            <Tx x={817} y={399} w={23} s={8.5} c="#828282" f="Roboto">PERU</Tx>
            <Tx x={868} y={433.5} w={36} s={8.5} c="#828282" f="Roboto">BOLÍVIA</Tx>
            <Tx x={897} y={470} w={41} s={8} c="#7d7d7d" f="Roboto">PARAGUAI</Tx>
            <Tx x={840.5} y={488} w={27} s={9} c="#828282" f="Roboto">CHILE</Tx>
            <Tx x={909} y={529.5} w={37} s={8} c="#7d7d7d" f="Roboto">URUGUAI</Tx>
            <Tx x={861.5} y={542} w={52} s={8.5} c="#828282" f="Roboto">ARGENTINA</Tx>
          </g>
        </g>
        <path d="M710 549h4.200v4.200H710z" fill="#f25022" /><path d="M714.800 549h4.200v4.200h-4.200z" fill="#7fba00" />
        <path d="M710 553.800h4.200v4.200H710z" fill="#00a4ef" /><path d="M714.800 553.800h4.200v4.200h-4.200z" fill="#ffb900" />
        <Tx x={721} y={556} w={46.5} s={8} c="#e8e7e6" wt={600}>Microsoft Bing</Tx>
        <Tx x={1010} y={559.5} w={107} s={8.5} c="#fff">© 2024 Microsoft Corporation</Tx>
        <Tx x={1123} y={559.5} w={22} s={8.5} c="#fff">Terms</Tx>
        <path d="M1123 561h22" stroke="#b8b6e8" />
      </svg>
    </section>
  );
}

function Sales() {
  const steps: [string, number, number][] = [["dez", 505, 530], ["mai", 483, 506], ["nov", 463, 485], ["jun", 442, 463], ["fev", 422, 443], ["out", 403, 424], ["abr", 388, 404], ["ago", 374, 389], ["jan", 361, 375], ["mar", 348, 361], ["set", 336, 349], ["jul", 325, 337]];
  const Y = (v: number) => 570 + v / 3;
  return (
    <section className={`mt-[13px] h-[204px] ${cardBox}`}>
      <svg width="489" height="204" viewBox="692 592 489 204">
        <Tx x={704} y={619} w={72} s={13.5} c="#fff" wt={700}>Vendas por</Tx>
        <Tx x={704} y={635} w={185} s={8.5} c="#a19f9d">selecione os aspecto que deseja analisar as vendas</Tx>
        <circle cx="710.500" cy="657.700" r="4.600" fill="#37a93f" />
        <circle cx="774" cy="657.700" r="4.600" fill="#d64550" />
        <circle cx="830" cy="657.700" r="4.600" fill="#3f8cff" />
        <Tx x={717} y={662} w={47} s={11.5}>Aumentar</Tx>
        <Tx x={780.5} y={662} w={41} s={11.5}>Diminuir</Tx>
        <Tx x={837} y={662} w={22} s={11.5}>Total</Tx>
        {[678.5, 712.5, 747.5].map((y) => <path key={y} d={`M759 ${y}H1177`} stroke="#a19f9d" strokeDasharray="1 3.500" />)}
        <Tx x={750.5} y={682.5} w={29} a="end" s={11.5}>0,4 Mi</Tx>
        <Tx x={750.5} y={716.5} w={29} a="end" s={11.5}>0,2 Mi</Tx>
        <Tx x={750.5} y={751.5} w={29} a="end" s={11.5}>0,0 Mi</Tx>
        {steps.map(([m, a, b], i) => (
          <g key={m}>
            <rect x={772.2 + i * 30.75} y={Y(a)} width="24.300" height={Y(b) - Y(a)} fill="#37a93f" />
            <path d={`M${772.2 + i * 30.75} ${Y(a) + 0.3}h55`} stroke="#a19f9d" />
            <Tx x={784.5 + i * 30.75} y={761.5} a="middle" s={11}>{m}</Tx>
          </g>
        ))}
        <rect x="1140.800" y="678.500" width="24.200" height="68.500" fill="#3f8cff" />
        <Tx x={1153.2} y={761.5} w={23} a="middle" s={11}>Total</Tx>
        <Tx x={969} y={777} w={28} a="middle" s={10.5} c="#252527">Meses</Tx>
        <text x="-712" y="715" transform="rotate(-90)" textAnchor="middle" fontSize="11" fill="#262628" fontFamily="Open Sans" textLength="60" lengthAdjust="spacingAndGlyphs">Soma de Meta</text>
      </svg>
    </section>
  );
}

function Dashboard() {
  return (
    <div className="h-[651px] w-[1158px] rounded-lg bg-[#111] shadow-[0_4px_10px_rgba(0,0,0,0.13)]">
      <div className="h-[86px] pt-[20px] pl-[28px]"><Brand /></div>
      <div className="flex gap-[13px] pl-[21px]">
        <div className="flex w-[617px] flex-col gap-[13px]">
          <KpiRow />
          <Goals />
          <Revenue />
        </div>
        <div className="w-[489px]">
          <div className={`mb-[13px] h-[77px] px-[8px] pt-2 ${cardBox}`}><div className="h-[62px] rounded-[2px] bg-[#353535]" /></div>
          <MapCard />
          <Sales />
        </div>
      </div>
    </div>
  );
}

function PageTabs() {
  const tab = "flex h-full items-center justify-center text-[12px] tracking-[-0.2px] border-r border-[#c8c6c4] bg-white pt-[3px]";
  return (
    <div className="flex h-[35px] items-stretch bg-[#f3f2f1]">
      <svg width="127" height="35" fill="none">
        <path d="M12.500 7.500h18v11h-18zM17 21.500h9M21.500 19v2" stroke="#484644" strokeWidth="1.400" />
        <path d="M10 29.500h24" stroke="#217864" strokeWidth="3" />
        <path d="M59.500 5.500h13v19h-13z" stroke="#484644" strokeWidth="1.400" /><path d="M65 22h3" stroke="#484644" />
        <path d="M98 14v8l-4.500-4zM116 14v8l4.500-4z" fill="#c8c6c4" />
      </svg>
      <div className={`w-[87px] border-l ${tab}`}>Página 1</div>
      <div className={`w-[86px] ${tab}`}>Página 2</div>
      <div className={`w-[88px] border-b-4 border-b-[#217864] pt-[7px]! font-semibold ${tab}`}>Página 3</div>
      <div className="flex w-[39px] items-center justify-center bg-[#257861]">
        <svg width="12" height="12" className="mb-[2px]"><path d="M6 .5v11M.5 6h11" stroke="#fff" strokeWidth="3" /></svg>
      </div>
    </div>
  );
}

const dbl = (flip: boolean) => (
  <svg width="13" height="13" viewBox="0 0 13 13" fill="none" stroke="#605e5c" className={flip ? "-scale-x-100" : ""}><path d="M1 .5l5.500 6L1 12.500M6.500.5l5.500 6-5.500 6" /></svg>
);

function PaneHead({ t }: { t: string }) {
  return (
    <div className="flex h-[36px] items-center pt-[3px] pr-[7px] pl-2">
      <span className="text-[15.5px] font-semibold tracking-[-0.2px] text-[#252423]">{t}</span>
      <svg width="15" height="3" className="mr-[9px] ml-auto"><path d="M0 0h2v2H0zM6.500 0h2v2h-2zM13 0h2v2h-2z" fill="#605e5c" /></svg>
      {dbl(false)}
    </div>
  );
}

function Search({ left }: { left?: boolean }) {
  return left ? (
    <svg width="15" height="15" viewBox="0 0 15 15" fill="none" stroke="#605e5c"><circle cx="9.500" cy="5.500" r="4.800" /><path d="M6 9 .5 14.500" /></svg>
  ) : (
    <svg width="15" height="15" viewBox="0 0 15 15" fill="none" stroke="#605e5c"><circle cx="6" cy="6" r="5" /><path d="M9.500 9.500l5 5" /></svg>
  );
}

function Chevron({ open }: { open?: boolean }) {
  return (
    <svg width="12" height="12" viewBox="0 0 12 12" fill="none" stroke="#797775" className="shrink-0">
      <path d={open ? "M.5 3 6 8.500 11.500 3" : "M3 .5 8.500 6 3 11.500"} />
    </svg>
  );
}

function FormatPane() {
  return (
    <section className="w-[181px] shrink-0 border-l border-[#e1dfdd] bg-[#f3f2f1]">
      <PaneHead t="Formato" />
      <div className="mt-[5px] mb-[12px] ml-2 flex h-[27px] w-[164px] items-center gap-[6px] border border-[#797775] pt-px pl-[7px] text-[13.5px] tracking-[-0.3px] text-[#605e5c]">
        <Search left /> Pesquisar
      </div>
      {["Informações da página", "Configurações de tela", "Tela de fundo", "Papel de parede", "Painel de filtros", "Cartões de filtro"].map((t) => (
        <div key={t} className="flex h-[41px] items-center border-b border-[#e1dfdd] pt-[2px] pl-[9px] text-[12px] font-medium tracking-[-0.22px] text-[#323130]">
          <svg width="8" height="13" viewBox="0 0 8 13" fill="none" stroke={D} className="mr-[7px] mb-[2px] ml-[1px]"><path d="M1 .5l5.500 6L1 12.500" strokeWidth="1.200" /></svg>
          {t}
        </div>
      ))}
    </section>
  );
}

const visuals = ["stackedBar", "stackedCol", "bar", "col", "fullBar", "fullCol", "line", "area", "stackArea", "fullArea", "combo1", "combo2", "ribbon", "waterfall", "funnel", "scatter", "pie", "donut", "treemap", "globe", "filledMap", "shapeMap", "arrow", "gauge", "card123", "multi", "kpi", "slicer", "table", "matrix", "r", "py", "dot", "tree", "chat", "narrative", "trophy", "report", "flash123", "flashSlicer", "azure", "apps", "automate", "dots"];

function BuildPane() {
  return (
    <section className="w-[181px] shrink-0 border-l border-[#e1dfdd] bg-[#f3f2f1]">
      <PaneHead t="Compilar" />
      <div className="mt-[1px] ml-2 h-[20px] text-[12px] leading-[18px] tracking-[-0.3px] text-[#323130]">Sugestões</div>
      <div className="ml-2 h-[245px] w-[164px] rounded-[2px] border border-[#8a8886] bg-white px-[3px] pt-[2px]">
        <div className="grid grid-cols-[repeat(6,26px)] auto-rows-[26px] place-items-center">
          {visuals.map((k) => <Glyph key={k} k={k} />)}
        </div>
        <div className="mt-px border-t border-[#8a8886]" />
        <div className="mt-[3px] grid grid-cols-[repeat(6,26px)] auto-rows-[26px] place-items-center">
          <Glyph k="fish" />
          <Glyph k="box" />
        </div>
      </div>
      <div className="mt-[8px] ml-2 h-[20px] text-[12px] leading-[18px] tracking-[-0.3px] text-[#323130]">Dados</div>
      <div className="ml-2 flex h-10 w-[164px] items-center justify-center border border-dashed border-[#605e5c] bg-white">
        <div className="flex h-[30px] w-[154px] items-center justify-center rounded-[2px] border border-[#605e5c] pt-[2px] text-[12px] font-medium tracking-[-0.1px] text-[#252423]">+Adicionar dados</div>
      </div>
    </section>
  );
}

function TableIcon({ calc }: { calc?: boolean }) {
  return (
    <svg width="15" height="14" viewBox="0 0 15 14" fill="none" stroke="#252423" strokeWidth="1.100" className="shrink-0">
      <rect x=".6" y=".6" width="11" height="11.500" rx="2" />
      <path d="M.6 4.300h11M.6 8.300h11M4.300.6v11.500M8 .6v11.500" />
      {calc && (
        <>
          <rect x="7" y="4.500" width="7.500" height="9.500" fill="#f3f2f1" stroke="none" />
          <path d="M8 5.500h6v8H8zM8 8h6M8 10.700h6M11 8v5.500" />
        </>
      )}
    </svg>
  );
}

type Row = { t: string; kind: "table" | "calc" | "field"; open?: boolean; icon?: "sum" | "date" };
const f = (t: string, icon?: "sum" | "date"): Row => ({ t, kind: "field", icon });
const rows: Row[] = [
  { t: "1 dCalendario", kind: "calc" }, { t: "dCategoriasProdutos", kind: "table" }, { t: "dMarcas", kind: "table" }, { t: "dMetaMensal", kind: "table", open: true },
  f("Ano", "sum"), f("Categoria"), f("Data"), f("Meses"), f("Meta", "sum"),
  { t: "dProdutosFinais", kind: "table" }, { t: "fpedidos", kind: "table" }, { t: "Medidas", kind: "calc" }, { t: "sales-2003", kind: "table", open: true },
  f("ADDRESSLINE1"), f("ADDRESSLINE2"), f("CITY"), f("CONTACTFIRSTNAME"), f("CONTACTLASTNAME"), f("COUNTRY"), f("CUSTOMERNAME"), f("DEALSIZE"),
  f("MONTH_ID", "sum"), f("MSRP", "sum"), f("ORDERDATE", "date"), f("ORDERLINENUMBER", "sum"), f("ORDERNUMBER", "sum"), f("PHONE"), f("POSTALCODE"),
  f("PRICEEACH", "sum"), f("PRODUCTCODE"), f("PRODUCTLINE"), f("QTR_ID", "sum"),
];

function DataPane() {
  return (
    <section className="w-[293px] shrink-0 border-l border-[#e1dfdd] bg-[#f3f2f1]">
      <PaneHead t="Dados" />
      <div className="mt-[9px] ml-[4px] flex h-[24px] w-[284px] items-center gap-[6px] rounded-[3px] border border-[#d2d0ce] border-b-[#605e5c] bg-white pt-px pl-[12px] text-[12.5px] tracking-[-0.1px] text-[#605e5c]">
        <Search /> Pesquisar
      </div>
      <div className="mt-[8px] flex h-[762px] overflow-hidden">
        <div className="w-[280px] pt-[2px]">
          {rows.map((r) =>
            r.kind === "field" ? (
              <div key={r.t} className="flex h-6 items-center pl-[28px] text-[12px] tracking-[-0.35px] text-[#323130]">
                <span className="flex w-[16px] items-center">{r.icon === "date" && <Chevron />}</span>
                <span className="h-[12px] w-[12px] shrink-0 rounded-[2px] border border-[#797775]" />
                <span className="ml-2 w-[18px]">
                  {r.icon === "sum" && <svg width="12" height="12" viewBox="0 0 12 12" fill="none" stroke="#252423" strokeWidth="1.100"><path d="M11 .6H1L6.500 6 1 11.400h10" /></svg>}
                  {r.icon === "date" && <svg width="12" height="12" viewBox="0 0 12 12" fill="none" stroke="#252423" strokeWidth="1.100"><rect x=".6" y=".6" width="10.800" height="10.800" rx="2" /><path d="M.6 3.500h10.800" /><path d="M3 6h6.500M3 8.500h5" strokeDasharray="1.200 1.200" /></svg>}
                </span>
                {r.t}
              </div>
            ) : (
              <div key={r.t} className="flex h-6 items-center pl-[13px] text-[12px] tracking-[-0.25px] text-[#323130]">
                <Chevron open={r.open} />
                <span className="mr-[3px] ml-[4px]"><TableIcon calc={r.kind === "calc"} /></span>
                {r.t}
              </div>
            )
          )}
        </div>
        <div className="h-[604px] w-2 bg-[#c8c6c4]" />
      </div>
    </section>
  );
}

function RightStrip() {
  const on = "flex h-8 items-center justify-center border border-[#605e5c] bg-[#e1dfdd]";
  const off = "flex h-8 items-center justify-center";
  return (
    <aside className="flex w-[32px] shrink-0 flex-col border-l border-[#e1dfdd] bg-[#faf9f8]">
      <div className={on}><svg width="20" height="20" fill="#fff" stroke={D}><path d="M3.500 4v12c0 3 13 3 13 0V4" /><ellipse cx="10" cy="4" rx="6.500" ry="2.500" /></svg></div>
      <div className={on}><svg width="20" height="20" fill="#fff" stroke={D}><path d="M1.500 7.500h5v11h-5zM11.500 5.500h4v4h-4z" /><path d="M6.500 1.500h5v17h-5z" /><path d="M10.500 9v8c0 3 8 3 8 0V9" stroke="#d9752c" strokeWidth="1.200" /><ellipse cx="14.500" cy="9" rx="4" ry="1.500" stroke="#d9752c" /></svg></div>
      <div className={on}><svg width="20" height="20" fill="#fff" stroke={D}><path d="M1.500 7.500h5v11h-5zM11.500 5.500h4v8h-4z" /><path d="M6.500 1.500h5v17h-5z" /><path d="M18 6l1 1-7 8-2-2z" /><path d="M10 13l3 3c-1 3-5 3-9 2 3-1 3-5 6-5z" fill={F} stroke={B} /></svg></div>
      <div className={off}><svg width="20" height="20" fill="none" stroke={D}><path d="M5 1.500h10v17l-5-5-5 5z" strokeWidth="1.200" /></svg></div>
      <div className={off}><svg width="20" height="20" fill="#fff" stroke={D}><path d="M7.500 1.500h11v11h-11z" fill="#f8d58a" stroke="#d98b1c" /><path d="M1.500 9.500h9v9h-9z" /><path d="M11 5.500v12l3-3 2 4 1.500-1-2-3.500h4z" /></svg></div>
      <div className={off}><svg width="18" height="18" stroke="#000"><path d="M9.500 0v18M0 9.500h18" strokeWidth="1.200" /></svg></div>
      <div className="mt-auto flex h-8 items-center justify-center border-t border-[#e1dfdd]">
        <svg width="20" height="20" viewBox="0 0 20 20" fill="none" stroke={D} strokeWidth="1.400">
          <path d="M8 1h4l.8 2.800L15 5l3-.8L20 8l-2 2 2 2-2 3.800-3-.8-2.200 1.200L12 19H8l-.8-2.800L5 15l-3 .8L0 12l2-2-2-2 2-3.800L5 5l2.200-1.200z" strokeLinejoin="round" transform="translate(.7 .7) scale(.93)" />
          <circle cx="10" cy="10" r="3" />
        </svg>
      </div>
    </aside>
  );
}

export default function App() {
  return (
    <div className="flex h-[1029px] w-[1919px] flex-col overflow-hidden bg-[#f3f2f1] font-['Open_Sans',sans-serif] text-[#252423] [font-stretch:90%]">
      <TitleBar />
      <Ribbon />
      <main className="flex h-[847px]">
        <LeftNav />
        <div className="flex min-w-0 flex-1 flex-col bg-white">
          <div className="flex flex-1">
            <div className="flex-1"><Dashboard /></div>
            <div className="flex w-[33px] flex-col items-center pt-[13px]">
              {dbl(true)}
              <svg width="13" height="13" viewBox="0 0 13 13" fill="none" stroke={D} className="mt-[15px]"><path d="M12 .8v11.400L6.500 8H1V5h5.500z" strokeWidth="1.200" /></svg>
              <div className="mt-[8px] text-[14.5px] font-semibold tracking-[-0.1px] [writing-mode:vertical-rl]">Filtros</div>
            </div>
          </div>
          <PageTabs />
        </div>
        <FormatPane />
        <BuildPane />
        <DataPane />
        <RightStrip />
      </main>
      <footer className="flex h-[22px] items-center border-t border-[#e1dfdd] pt-[4px] pl-1 text-[12px] tracking-[-0.18px] text-[#323130]">
        <span>Página 3 de 3</span>
        <svg width="124" height="14" className="mr-[14px] mb-[3px] ml-auto" fill="none" stroke="#605e5c">
          <path d="M1 7.500h4" strokeWidth="1.500" /><path d="M9 6.500h100M59.500 3.500v6" /><path d="M54 1v11" strokeWidth="4" /><path d="M115 7h7M118.500 3.500v7" />
        </svg>
        <span className="mb-[3px] text-[11.5px] tracking-[-0.5px]">90%</span>
        <svg width="17" height="12" className="mr-[17px] mb-[2px] ml-[19px]" fill="none" stroke="#605e5c"><path d="M.5.5h15v11H.5z" /><path d="M3 5V3h2M11 3h2v2M13 7.500v2h-2M5 9.500H3v-2" /></svg>
      </footer>
    </div>
  );
}
